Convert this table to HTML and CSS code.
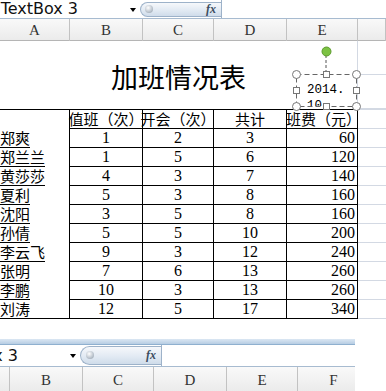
FILE: index.html
```html
<!DOCTYPE html>
<html lang="zh-CN">
<head>
<meta charset="utf-8">
<title>加班情况表</title>
<link rel="stylesheet" href="styles.css">
</head>
<body>
<div class="win win-top">
  <div class="fbar">
    <div class="namebox"><span class="nm">TextBox 3</span><span class="dd"></span></div>
    <div class="pill"><span class="knob"></span><span class="fx">fx</span></div>
    <div class="finput"></div>
  </div>
  <div class="colhead">
    <div>A</div><div>B</div><div>C</div><div>D</div><div>E</div><div></div>
  </div>
</div>

<div class="sheet">
  <div class="titleblk">
    <div class="title">加班情况表</div>
    <div class="gf"></div>
    <div class="gf"></div>
  </div>
  <div class="tbl">
    <div class="c a hd"></div><div class="c hd"><div class="in">值班（次）</div></div><div class="c hd"><div class="in">开会（次）</div></div><div class="c hd"><div class="in">共计</div></div><div class="c hd clipl"><div class="in">加班费（元）</div></div><div class="c f hd"></div>

    <div class="c a"><span class="nmx">郑爽</span></div><div class="c n">1</div><div class="c n">2</div><div class="c n">3</div><div class="c n r">60</div><div class="c f"></div>
    <div class="c a"><span class="nmx">郑兰兰</span></div><div class="c n">1</div><div class="c n">5</div><div class="c n">6</div><div class="c n r">120</div><div class="c f"></div>
    <div class="c a"><span class="nmx">黄莎莎</span></div><div class="c n">4</div><div class="c n">3</div><div class="c n">7</div><div class="c n r">140</div><div class="c f"></div>
    <div class="c a"><span class="nmx">夏利</span></div><div class="c n">5</div><div class="c n">3</div><div class="c n">8</div><div class="c n r">160</div><div class="c f"></div>
    <div class="c a"><span class="nmx">沈阳</span></div><div class="c n">3</div><div class="c n">5</div><div class="c n">8</div><div class="c n r">160</div><div class="c f"></div>
    <div class="c a"><span class="nmx">孙倩</span></div><div class="c n">5</div><div class="c n">5</div><div class="c n">10</div><div class="c n r">200</div><div class="c f"></div>
    <div class="c a"><span class="nmx">李云飞</span></div><div class="c n">9</div><div class="c n">3</div><div class="c n">12</div><div class="c n r">240</div><div class="c f"></div>
    <div class="c a"><span class="nmx">张明</span></div><div class="c n">7</div><div class="c n">6</div><div class="c n">13</div><div class="c n r">260</div><div class="c f"></div>
    <div class="c a"><span class="nmx">李鹏</span></div><div class="c n">10</div><div class="c n">3</div><div class="c n">13</div><div class="c n r">260</div><div class="c f"></div>
    <div class="c a last"><span class="nmx">刘涛</span></div><div class="c n">12</div><div class="c n">5</div><div class="c n">17</div><div class="c n r">340</div><div class="c f"></div>
  </div>
  <div class="below"></div>
</div>

<div class="win win-bottom">
  <div class="bluebar"></div>
  <div class="shift">
    <div class="fbar fbar2">
      <div class="namebox"><span class="nm">TextBox 3</span><span class="dd"></span></div>
      <div class="pill"><span class="knob"></span><span class="fx">fx</span></div>
      <div class="finput"></div>
    </div>
    <div class="colhead colhead2">
      <div>A</div><div>B</div><div>C</div><div>D</div><div>E</div><div>F</div><div></div>
    </div>
  </div>
</div>

<div class="tbox-text">2014.<br>10</div>
<svg class="handles" width="76" height="70" viewBox="0 0 76 70">
  <line x1="40" y1="11" x2="40" y2="27" stroke="#555" stroke-width="1" stroke-dasharray="3 2"/>
  <rect x="10.5" y="30.5" width="60" height="32" fill="none" stroke="#666" stroke-width="1" stroke-dasharray="5 3"/>
  <circle cx="40.5" cy="7.5" r="4.5" fill="#7cc243" stroke="#5c9a2c"/>
  <circle cx="10.5" cy="30.5" r="4" fill="#fff" stroke="#777"/>
  <circle cx="70.5" cy="30.5" r="4" fill="#fff" stroke="#777"/>
  <circle cx="10.5" cy="62.5" r="4" fill="#fff" stroke="#777"/>
  <circle cx="70.5" cy="62.5" r="4" fill="#fff" stroke="#777"/>
  <rect x="37.5" y="27.5" width="6" height="6" fill="#fff" stroke="#777"/>
  <rect x="37.5" y="59.5" width="6" height="6" fill="#fff" stroke="#777"/>
  <rect x="7.5" y="43.5" width="6" height="6" fill="#fff" stroke="#777"/>
  <rect x="67.5" y="43.5" width="6" height="6" fill="#fff" stroke="#777"/>
</svg>
</body>
</html>
```
FILE: styles.css
```css
html, body {
  margin: 0;
  padding: 0;
}
body {
  width: 386px;
  height: 391px;
  overflow: hidden;
  position: relative;
  background: #fff;
  font-family: "Liberation Serif", "Noto Sans CJK SC", serif;
  color: #000;
}

/* ---------- formula bar ---------- */
.fbar {
  display: flex;
  height: 18px;
  border-bottom: 1px solid #a7bbd0;
  background: #fff;
}
.namebox {
  position: relative;
  flex: none;
  width: 140px;
  overflow: hidden;
}
.nm {
  display: flex;
  justify-content: flex-end;
  width: 82px;
  margin-left: -4px;
  font-family: "DejaVu Sans", sans-serif;
  font-size: 16px;
  line-height: 18px;
  color: #111;
  white-space: nowrap;
}
.dd {
  position: absolute;
  left: 130px;
  top: 8px;
  width: 0;
  height: 0;
  border-left: 3.5px solid transparent;
  border-right: 3.5px solid transparent;
  border-top: 4px solid #000;
}
.pill {
  position: relative;
  flex: none;
  width: 81px;
  height: 15px;
  margin-top: 2px;
  box-sizing: border-box;
  border: 1px solid #9db2c9;
  border-right: none;
  border-radius: 8px 0 0 8px;
  background: linear-gradient(#f6f8fb, #e2eaf3 55%, #cfdcea);
}
.knob {
  position: absolute;
  left: 4px;
  top: 2px;
  width: 8px;
  height: 8px;
  border-radius: 50%;
  background: radial-gradient(circle at 40% 35%, #ffffff, #b9c2cc 60%, #8e99a5);
}
.fx {
  position: absolute;
  right: 5px;
  top: -1px;
  font-family: "Liberation Serif", serif;
  font-style: italic;
  font-weight: bold;
  font-size: 12px;
  line-height: 15px;
  color: #3c4d60;
}
.finput {
  flex: 1;
  border-left: 1px solid #9db2c9;
}

/* ---------- column headers ---------- */
.colhead {
  display: grid;
  grid-template-columns: 70px 73px 71px 73px 71px 1fr;
  height: 21px;
  border-bottom: 1px solid #b5b5b5;
  background: linear-gradient(#f9f9f9, #ebebeb);
}
.colhead > div {
  border-right: 1px solid #c2c2c2;
  text-align: center;
  font-family: "Liberation Serif", serif;
  font-size: 15px;
  line-height: 22px;
  color: #333;
}

/* ---------- sheet ---------- */
.titleblk {
  display: grid;
  grid-template-columns: 357px 1fr;
  grid-template-rows: 34px 34px;
}
.title {
  grid-row: 1 / 3;
  display: flex;
  align-items: center;
  justify-content: center;
  font-family: "Noto Sans CJK SC", sans-serif;
  font-size: 27px;
  padding-top: 2px;
}
.gf {
  border-left: 1px solid #d3d9e3;
  border-bottom: 1px solid #d3d9e3;
}

.tbl {
  display: grid;
  grid-template-columns: 70px 73px 71px 73px 71px 1fr;
  grid-template-rows: 20px;
  grid-auto-rows: 19px;
}
.c {
  box-sizing: border-box;
  border-right: 1px solid #000;
  border-bottom: 1px solid #000;
  font-size: 16px;
  line-height: 18px;
  white-space: nowrap;
}
.c.hd {
  border-top: 1px solid #000;
  height: 20px;
}
.in {
  display: flex;
  justify-content: center;
  font-family: "Noto Sans CJK SC", sans-serif;
  font-size: 15px;
  line-height: 18px;
}
.clipl {
  clip-path: inset(0 -30px 0 0);
}
.clipl .in {
  margin-left: -12px;
}
.c.a {
  border-bottom: none;
}
.c.a.last {
  border-bottom: 1px solid #000;
}
.nmx {
  display: inline-block;
  font-family: "Noto Sans CJK SC", sans-serif;
  font-size: 15px;
  line-height: 18px;
  height: 18px;
  border-bottom: 1px solid #000;
  vertical-align: top;
}
.c.a.last .nmx {
  border-bottom: none;
}
.c.n {
  text-align: center;
  font-family: "Liberation Serif", serif;
  font-size: 16px;
}
.c.n.r {
  text-align: right;
  padding-right: 2px;
}
.c.f {
  border-right: none;
  border-bottom: 1px solid #d3d9e3;
}
.c.f.hd {
  border-top: 1px solid #d3d9e3;
}
.below {
  height: 20px;
}

/* ---------- bottom window ---------- */
.win-bottom {
  width: 355px;
  overflow: hidden;
}
.bluebar {
  height: 6px;
  box-sizing: border-box;
  background: linear-gradient(#dbe7f3, #b7cde3);
  border-bottom: 1px solid #8fb0cf;
}
.shift {
  margin-left: -60px;
  width: 446px;
}
.fbar2 {
  height: 21px;
}
.fbar2 .nm {
  line-height: 22px;
}
.fbar2 .dd {
  top: 9px;
}
.fbar2 .pill {
  height: 19px;
  margin-top: 1px;
  border-radius: 10px 0 0 10px;
}
.fbar2 .knob {
  top: 4px;
  left: 5px;
}
.fbar2 .fx {
  top: 1px;
}
.colhead2 {
  grid-template-columns: 70px 73px 71px 73px 71px 72px 1fr;
  height: 24px;
  border-bottom: none;
}
.colhead2 > div {
  line-height: 26px;
}

/* ---------- text box overlay ---------- */
.tbox-text {
  position: absolute;
  left: 297px;
  top: 75px;
  width: 58px;
  height: 31px;
  overflow: hidden;
  box-sizing: border-box;
  padding: 7px 0 0 10px;
  font-family: "Liberation Mono", monospace;
  font-size: 12.5px;
  line-height: 16px;
  color: #000;
}
.handles {
  position: absolute;
  left: 286px;
  top: 44px;
}
```
